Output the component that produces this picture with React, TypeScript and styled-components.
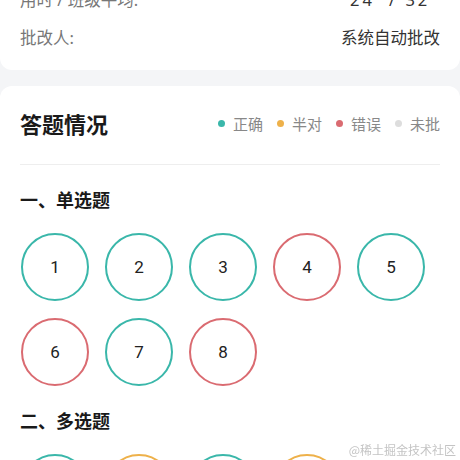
import * as React from 'react';
import styled, { createGlobalStyle } from 'styled-components';

const GlobalStyle = createGlobalStyle`
  html, body {
    margin: 0;
    padding: 0;
    background: #f4f5f7;
    font-family: "Noto Sans", "Noto Sans CJK SC", sans-serif;
    overflow: hidden;
  }
`;

const TEAL = '#3ab7aa';
const ORANGE = '#eeb14a';
const RED = '#da6b71';
const GRAY = '#dddddd';

type Status = 'right' | 'half' | 'wrong' | 'none';

const statusColor: Record<Status, string> = {
  right: TEAL,
  half: ORANGE,
  wrong: RED,
  none: GRAY,
};

const Page = styled.div`
  margin-top: -12px;
  display: flex;
  flex-direction: column;
  gap: 16px;
`;

const Card = styled.div`
  background: #fff;
  border-radius: 12px;
  padding: 0 20px 21px;
`;

const SummaryCard = styled(Card)`
  display: flex;
  flex-direction: column;
  gap: 16px;
  padding-bottom: 22px;
  border-top-left-radius: 0;
  border-top-right-radius: 0;
`;

const InfoRow = styled.div`
  display: flex;
  justify-content: space-between;
  align-items: center;
  height: 22px;
  font-size: 16.5px;
`;

const InfoLabel = styled.span`
  color: #777;
`;

const InfoValue = styled.span<{ $spacing?: number; $pad?: number }>`
  color: #333;
  letter-spacing: ${p => p.$spacing ?? 0}px;
  padding-right: ${p => p.$pad ?? 0}px;
`;

const AnswerCard = styled(Card)`
  padding-top: 21px;
`;

const Header = styled.div`
  display: flex;
  justify-content: space-between;
  align-items: center;
  height: 32px;
  padding-bottom: 25px;
  border-bottom: 1px solid #eeeeee;
`;

const Title = styled.h2`
  margin: 0;
  font-size: 22px;
  font-weight: 700;
  color: #1a1a1a;
`;

const Legend = styled.div`
  display: flex;
  align-items: center;
  gap: 14px;
`;

const LegendItem = styled.div`
  display: flex;
  align-items: center;
  gap: 8px;
  font-size: 15px;
  color: #888;
`;

const Dot = styled.span<{ $color: string }>`
  width: 7px;
  height: 7px;
  border-radius: 50%;
  background: ${p => p.$color};
`;

const Section = styled.div`
  margin-top: 23px;
`;

const SectionTitle = styled.h3`
  margin: 0 0 21px;
  height: 24px;
  line-height: 24px;
  font-size: 18px;
  font-weight: 700;
  color: #1a1a1a;
`;

const Grid = styled.div`
  display: grid;
  grid-template-columns: repeat(5, 68px);
  column-gap: 16px;
  row-gap: 17px;
  padding-left: 1px;
`;

const Bubble = styled.div<{ $status: Status }>`
  width: 68px;
  height: 68px;
  box-sizing: border-box;
  border-radius: 50%;
  border: 2px solid ${p => statusColor[p.$status]};
  display: flex;
  align-items: center;
  justify-content: center;
  font-family: Roboto, "Noto Sans", sans-serif;
  font-size: 17px;
  color: #222;
`;

const Watermark = styled.div`
  position: fixed;
  right: 4px;
  bottom: 2px;
  font-size: 12px;
  color: #c4c4c4;
  text-shadow: 0 0 1px #fff;
  font-family: "Noto Sans CJK SC", sans-serif;
`;

const single: Status[] = ['right', 'right', 'right', 'wrong', 'right', 'wrong', 'right', 'wrong'];
const multiple: Status[] = ['right', 'half', 'right', 'half'];

const legend: { label: string; status: Status }[] = [
  { label: '正确', status: 'right' },
  { label: '半对', status: 'half' },
  { label: '错误', status: 'wrong' },
  { label: '未批', status: 'none' },
];

const QuestionGroup = ({ title, items }: { title: string; items: Status[] }) => (
  <Section>
    <SectionTitle>{title}</SectionTitle>
    <Grid>
      {items.map((s, i) => (
        <Bubble key={i} $status={s}>{i + 1}</Bubble>
      ))}
    </Grid>
  </Section>
);

const App = () => (
  <>
    <GlobalStyle />
    <Page>
      <SummaryCard>
        <InfoRow>
          <InfoLabel>用时 / 班级平均:</InfoLabel>
          <InfoValue $spacing={3} $pad={3}>24' / 32'</InfoValue>
        </InfoRow>
        <InfoRow>
          <InfoLabel>批改人:</InfoLabel>
          <InfoValue>系统自动批改</InfoValue>
        </InfoRow>
      </SummaryCard>
      <AnswerCard>
        <Header>
          <Title>答题情况</Title>
          <Legend>
            {legend.map(l => (
              <LegendItem key={l.label}>
                <Dot $color={statusColor[l.status]} />
                {l.label}
              </LegendItem>
            ))}
          </Legend>
        </Header>
        <QuestionGroup title="一、单选题" items={single} />
        <QuestionGroup title="二、多选题" items={multiple} />
      </AnswerCard>
    </Page>
    <Watermark>@稀土掘金技术社区</Watermark>
  </>
);

export default App;
